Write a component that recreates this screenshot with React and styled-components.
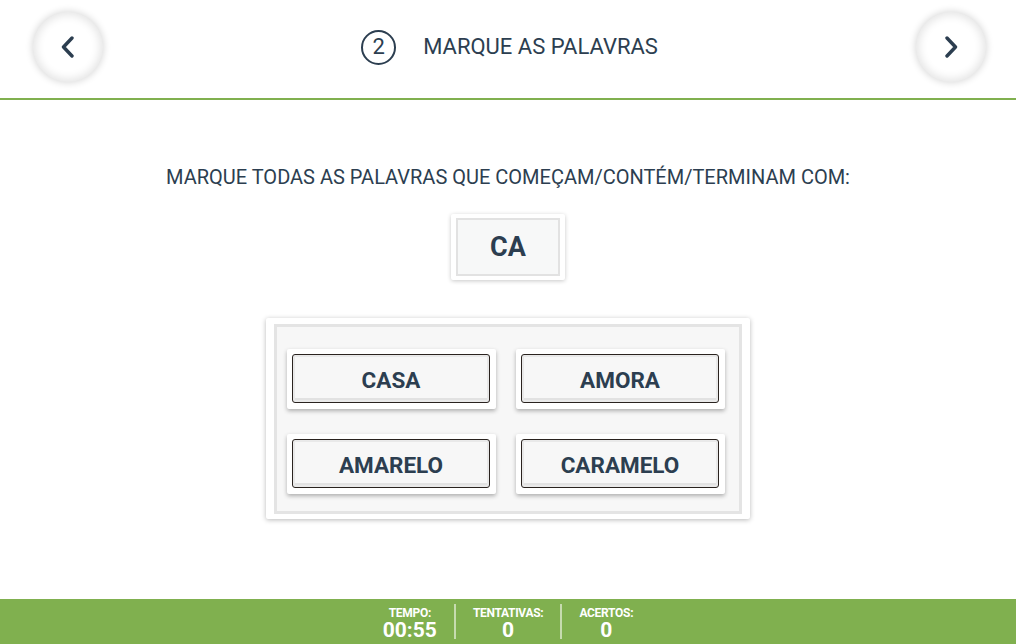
import React from "react";
import styled, { createGlobalStyle } from "styled-components";

const GREEN = "#80b04f";
const INK = "#2c3e50";

const Global = createGlobalStyle`
  html, body { margin: 0; padding: 0; background: #fff; }
  body { font-family: Roboto, "Liberation Sans", Arial, sans-serif; color: ${INK}; }
  * { box-sizing: border-box; }
`;

const Page = styled.div`
  height: 100vh;
  display: flex;
  flex-direction: column;
`;

const Header = styled.header`
  height: 100px;
  flex: 0 0 100px;
  border-bottom: 2px solid ${GREEN};
  display: flex;
  align-items: center;
  justify-content: space-between;
  padding: 0 30px 4px 33px;
`;

const NavButton = styled.button`
  width: 70px;
  height: 70px;
  border-radius: 50%;
  border: none;
  background: #fff;
  box-shadow: 0 0 7px 1px rgba(0, 0, 0, 0.15), inset 0 0 8px 3px rgba(0, 0, 0, 0.1);
  display: flex;
  align-items: center;
  justify-content: center;
  padding: 0;
  cursor: pointer;
`;

const Title = styled.div`
  display: flex;
  align-items: center;
  gap: 27px;
`;

const StepBadge = styled.div`
  width: 35px;
  height: 35px;
  border-radius: 50%;
  border: 2px solid ${INK};
  display: flex;
  align-items: center;
  justify-content: center;
  font-size: 22px;
  line-height: 1;
`;

const TitleText = styled.h1`
  margin: 0;
  font-size: 22px;
  font-weight: 400;
  line-height: 26px;
`;

const Main = styled.main`
  flex: 1;
  display: flex;
  flex-direction: column;
  align-items: center;
  padding-top: 64px;
`;

const Instruction = styled.p`
  margin: 0;
  font-size: 20px;
  line-height: 26px;
`;

const SyllableCard = styled.div`
  margin-top: 24px;
  padding: 4px 5px;
  background: #fff;
  box-shadow: 0 1px 4px rgba(0, 0, 0, 0.22);
  border-radius: 2px;
`;

const Syllable = styled.div`
  width: 104px;
  height: 58px;
  border: 2px solid #e2e2e2;
  background: #f7f8f8;
  display: flex;
  align-items: center;
  justify-content: center;
  font-size: 27px;
  font-weight: 700;
`;

const Panel = styled.div`
  margin-top: 38px;
  padding: 6px 8px 5px 8px;
  background: #fff;
  box-shadow: 0 1px 5px rgba(0, 0, 0, 0.28);
  border-radius: 2px;
`;

const PanelInner = styled.div`
  width: 468px;
  height: 190px;
  border: 3px solid #e4e4e4;
  background: #f7f7f7;
  display: grid;
  grid-template-columns: 209px 209px;
  grid-auto-rows: 60px;
  column-gap: 20px;
  row-gap: 25px;
  padding: 22px 14px 17px 10px;
`;

const WordCard = styled.div`
  background: #fff;
  border-radius: 2px;
  box-shadow: 0 2px 4px rgba(0, 0, 0, 0.3);
  padding: 5px 6px 6px 5px;
`;

const WordButton = styled.button`
  width: 100%;
  height: 100%;
  border: 1px solid #2a231f;
  border-radius: 3px;
  background: #f7f7f7;
  box-shadow: inset 0 0 0 2px #e9e9e9, inset 0 -2px 0 2px #e2e2e2;
  font-family: inherit;
  font-size: 22.5px;
  font-weight: 700;
  color: ${INK};
  cursor: pointer;
  padding: 2px 0 0;
`;

const Footer = styled.footer`
  height: 45px;
  flex: 0 0 45px;
  background: ${GREEN};
  display: flex;
  justify-content: center;
  align-items: center;
`;

const Stat = styled.div`
  display: flex;
  flex-direction: column;
  align-items: center;
  padding: 3px 17px 0;
  color: #fff;
  height: 35px;
  justify-content: center;
  & + & { border-left: 2px solid rgba(255, 255, 255, 0.55); }
`;

const StatLabel = styled.span`
  font-size: 12px;
  font-weight: 700;
  line-height: 14px;
  letter-spacing: -0.3px;
`;

const StatValue = styled.span`
  font-size: 21px;
  font-weight: 700;
  line-height: 20px;
`;

const Chevron = ({ dir }) => (
  <svg width="16" height="22" viewBox="0 0 16 22" fill="none">
    <path
      d={dir === "left" ? "M12 2 L3.5 11 L12 20" : "M4 2 L12.5 11 L4 20"}
      stroke={INK}
      strokeWidth="3.4"
      strokeLinecap="round"
      strokeLinejoin="round"
    />
  </svg>
);

const words = ["CASA", "AMORA", "AMARELO", "CARAMELO"];

export default function App() {
  return (
    <Page>
      <Global />
      <Header>
        <NavButton aria-label="Anterior"><Chevron dir="left" /></NavButton>
        <Title>
          <StepBadge>2</StepBadge>
          <TitleText>MARQUE AS PALAVRAS</TitleText>
        </Title>
        <NavButton aria-label="Próximo"><Chevron dir="right" /></NavButton>
      </Header>
      <Main>
        <Instruction>MARQUE TODAS AS PALAVRAS QUE COMEÇAM/CONTÉM/TERMINAM COM:</Instruction>
        <SyllableCard>
          <Syllable>CA</Syllable>
        </SyllableCard>
        <Panel>
          <PanelInner>
            {words.map((w) => (
              <WordCard key={w}>
                <WordButton>{w}</WordButton>
              </WordCard>
            ))}
          </PanelInner>
        </Panel>
      </Main>
      <Footer>
        <Stat>
          <StatLabel>TEMPO:</StatLabel>
          <StatValue>00:55</StatValue>
        </Stat>
        <Stat>
          <StatLabel>TENTATIVAS:</StatLabel>
          <StatValue>0</StatValue>
        </Stat>
        <Stat>
          <StatLabel>ACERTOS:</StatLabel>
          <StatValue>0</StatValue>
        </Stat>
      </Footer>
    </Page>
  );
}
